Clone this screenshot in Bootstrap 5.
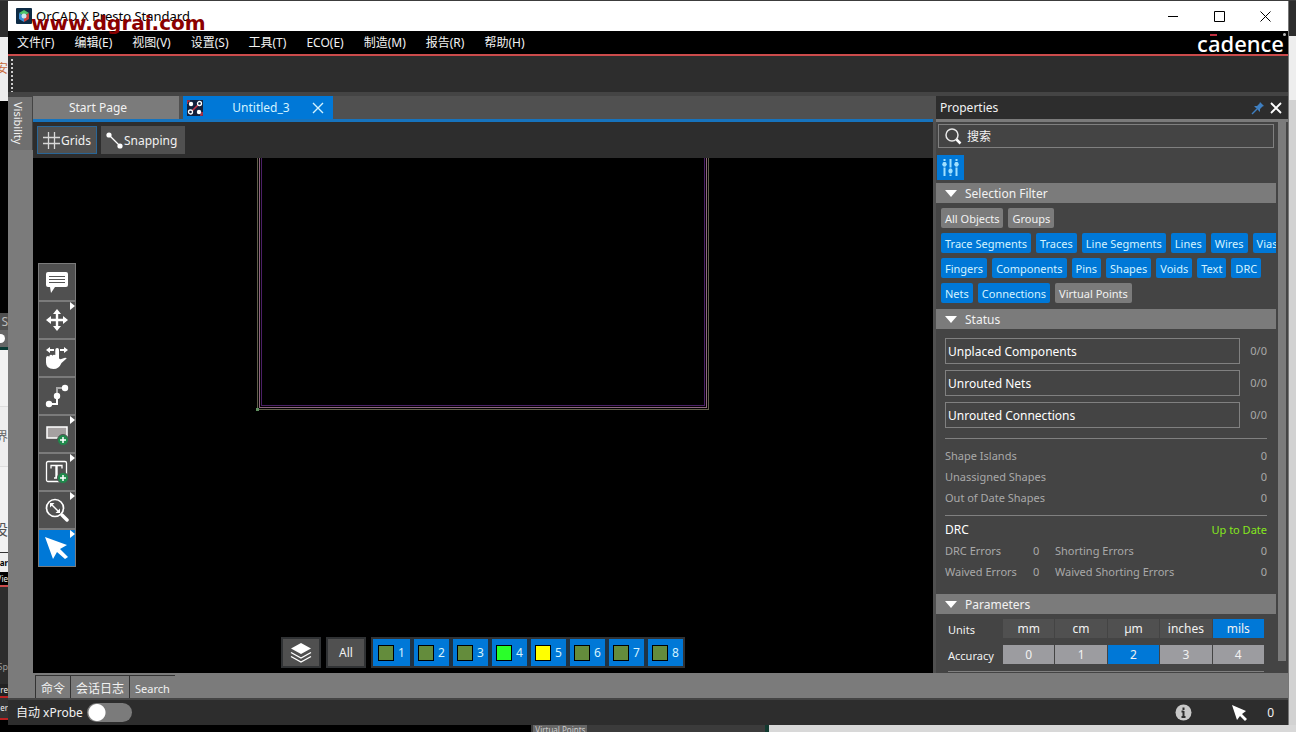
<!DOCTYPE html>
<html lang="zh-CN" data-bs-theme="dark">
<head>
<meta charset="utf-8">
<meta name="viewport" content="width=device-width, initial-scale=1">
<title>OrCAD X Presto Standard</title>
<link href="https://cdn.jsdelivr.net/npm/bootstrap@5.3.0/dist/css/bootstrap.min.css" rel="stylesheet">
<style>
:root{--blue:#0078d7;--bar:#2d2d2d;--panel:#444;--grey:#7b7b7b;--cell:#505050;--dim:#a9a9a9}
body{font-family:"Noto Sans","Noto Sans CJK SC",sans-serif;font-size:12px;line-height:16px;color:#f2f2f2;background:#000}
button,input{font:inherit;color:inherit;border:0;padding:0}
svg{display:block;flex:none}
.desktop{height:100vh;display:grid;grid-template:1px minmax(0,1fr) 7px / 8px minmax(0,1fr) 8px}
.edge-top{grid-column:1/4;background:#3c3c3c}
.edge-left>div{overflow:hidden;display:flex;justify-content:flex-end;align-items:center;white-space:nowrap;flex:none}
.edge-bottom{grid-column:1/4;overflow:hidden}
.ghost{background:#3b3b3b;padding-left:2px}
.ghost span{display:inline-block;background:#666;color:#ccc;font-size:8px;line-height:10px;padding:0 2px;vertical-align:top}
.app{box-shadow:1px 0 0 #777;background:var(--panel);z-index:1}
.title-bar{height:30px;background:#fff;color:#000}
.title-bar .name{font-size:13px}
.title-bar .btn-win{width:46px;height:28px;background:none;color:#000;display:grid;place-items:center}
.watermark{position:absolute;left:23px;top:9px;font:bold 20px/26px "DejaVu Sans",sans-serif;color:#8b0000;z-index:3;pointer-events:none}
.menu-bar{height:25px;background:#000;border-bottom:2px solid #cb4b4b}
.menu-bar a{color:#f2f2f2;text-decoration:none}
.menu-bar nav{gap:20px;padding-left:9px}
.brand{font-size:22px;line-height:22px;font-weight:500;color:#fff}
.brand .bar-a{position:relative}
.brand .bar-a::before{content:"";position:absolute;left:2px;top:6px;width:7px;height:2px;background:#c03040}
.brand .dot{position:absolute;right:2px;top:2px;width:3px;height:3px;border-radius:50%;background:#bbb}
.tool-strip{height:36px;background:var(--bar);padding:3px 0 0 3px}
.grip{width:2px;background:repeating-linear-gradient(#ccc 0 2px,transparent 2px 4px)}
.rail{width:25px;background:var(--grey)}
.rail button{writing-mode:vertical-rl;background:#6f6f6f;height:54px;width:25px;border:solid #444;border-width:1px 1px 0 0;text-align:left;padding:5px 4px 0 0;line-height:18px;white-space:nowrap;font-size:11px}
.doc-tabs{height:26px;background:#505050;border-bottom:3px solid #1673bd;gap:4px}
.doc-tabs .tab-doc{height:23px;background:var(--grey)}
.doc-tabs .tab-doc.on{background:var(--blue);color:#d3f3ff;width:150px}
.view-tools{height:36px;background:var(--bar);padding:4px;gap:4px}
.view-tools button{height:28px;background:#505050;border:1px solid #505050;padding:1px 7px 0 5px;gap:1px}
.view-tools button+button{padding-left:4px}
.view-tools button.on{border-color:#2a6697;padding-right:5px}
.canvas{background:#000;overflow:hidden}
.outline{width:452px;height:49%;border:1px solid #625f4b;border-top:0;padding:0 1px 1px;position:relative}
.outline div{border:1px solid #8f6880;border-top:0;padding:0 1px 1px;height:100%}
.outline div div{border-color:#4b2066}
.outline::after{content:"";position:absolute;left:-2px;bottom:-2px;width:3px;height:3px;background:#5f8f5f}
.palette{left:5px;top:0;bottom:1px;display:flex;flex-direction:column;justify-content:center}
.palette button{width:38px;height:38px;background:var(--cell);border:1px solid var(--grey);position:relative;display:grid;place-items:center}
.palette button.on{background:var(--blue)}
.palette .more::after{content:"";position:absolute;right:0;top:0;border:solid transparent;border-width:4px 0 4px 5px;border-left-color:#fff}
.layer-bar{bottom:5px;left:0;right:0;gap:5px}
.layer-bar>*{border:2px solid #303234;height:31px}
.layer-bar>button{width:40px;background:var(--cell)}
.layers{gap:4px;background:#1f3345}
.layers button{background:var(--blue);width:35px;color:#d3f3ff;gap:4px}
.layers button:first-child{width:37px}
.swatch{width:16px;height:16px;border:1px solid #000;background:#648c3c}
.split-v{width:3px;background:#505050}
.panel-side{width:352px;background:var(--panel)}
.panel-head{height:26px;background:var(--bar);border-bottom:3px solid var(--grey);padding:0 5px 0 4px}
.panel-head button{background:none}
.scroll-body{width:340px;overflow:hidden;flex:none}
.scroll-track{width:8px;margin:0 2px 12px 2px;background:var(--grey)}
.find-box{margin:2px 2px 7px;height:24px;border:1px solid #808080;padding:0 6px;gap:5px}
.find-box input{background:none;outline:0;padding-top:2px}
.find-box input::placeholder{color:#f2f2f2;opacity:1}
.filter-btn{width:27px;height:25px;margin:0 1px 3px;background:var(--blue);display:grid;place-items:center}
.section-head{height:20px;background:var(--grey);padding:2px 0 0 9px;gap:8px;width:100%;text-align:left}
.chips{padding:5px 0 6px 5px;gap:5px}
.chips>div{gap:5px;white-space:nowrap}
.chip{height:20px;padding:1px 4px 0;border-radius:2px;background:var(--blue);color:#d3f3ff;flex:none;font-size:11px}
.chip.off{background:var(--grey);color:#f2f2f2}
.status-block{padding:9px 9px 0}
.goto{gap:6px}
.goto button{height:26px;flex:1;border:1px solid #808080;background:none;text-align:left;padding:2px 0 0 2px;color:#fff}
.goto div{gap:10px}
.dimmed{color:var(--dim)}
.goto .dimmed,table.facts{font-size:11px}
.rule{border-top:1px solid #808080}
.facts{margin:0}
.facts,.facts td,.facts th{line-height:21px;padding:0;font-weight:400}
.goto+.facts{margin:10px 0 7px;border-collapse:separate;border-spacing:0;padding-top:6px}
.facts-drc{padding-top:3px;margin-bottom:12px}
.fresh{color:#85e81c;font-size:11px}
.c-name{width:88px}
.c-num{width:22px}
.opts{padding:5px 12px 0;gap:7px}
.opts .lbl{width:55px;flex:none;padding-top:3px;font-size:11px}
.opts .seg{display:grid;grid-template-columns:repeat(5,1fr);gap:1px;flex:1}
.opts button{height:19px;background:var(--cell)}
.opts .acc button{background:#9c9ca0}
.opts button.on,.opts .acc button.on{background:var(--blue)}
.bottom-tabs{height:27px;background:var(--grey);border-bottom:2px solid #444;padding:2px 0 0 27px}
.bottom-tabs button{background:none;border-top:1px solid #333;border-left:1px solid #333;padding:3px 5px 0}
.bottom-tabs button:last-child{font-size:11px}
.foot{height:25px;background:var(--bar);padding:0 14px 0 8px}
.foot .toggle{appearance:none;width:45px;height:19px;border-radius:10px;background:radial-gradient(circle at 10px 50%,#fff 8px,var(--grey) 9px)}
.foot .info{margin-right:40px}
.foot .ptr{margin-right:19px}
</style>
</head>
<body>
<div class="desktop">
  <div class="edge-top"></div>
  <div class="edge-left d-flex flex-column overflow-hidden" aria-hidden="true">
    <div style="height:36px;background:#2d2d2d"></div>
    <div style="height:64px;background:#eee;color:#c86a3c">安</div>
    <div style="height:212px;background:#000"></div>
    <div style="height:17px;background:#505050;color:#bbb">S</div>
    <div style="height:17px;background:#666"><i class="bg-white rounded-circle flex-shrink-0" style="width:9px;height:9px;margin-right:3px"></i></div>
    <div style="height:3px;background:#0a3a34"></div>
    <div style="height:56px;background:#f2f2f2"></div>
    <div style="height:60px;background:#eee;color:#666;border-top:1px solid #ddd">界</div>
    <div style="height:86px;background:#f2f2f2;color:#555;font-size:15px;border-top:1px solid #ddd;padding-top:38px">设</div>
    <div style="height:20px;background:#eee;color:#000;font-size:8px;font-weight:700;border-top:1px solid #333">tar</div>
    <div style="height:13px;background:#000;font-size:8px">Vie</div>
    <div style="height:99px;background:#2d2d2d;border-top:2px solid #cb4b4b;color:#999;font-size:9px;padding-top:62px">Sp</div>
    <div style="height:14px;background:#222;border-bottom:2px solid #b22;font-size:8px">re</div>
    <div style="height:22px;background:#333;border-bottom:2px solid #b22;font-size:8px">er</div>
  </div>

  <main class="app d-flex flex-column position-relative">
    <header class="title-bar d-flex align-items-center justify-content-between flex-shrink-0">
      <div class="d-flex align-items-center ps-2 gap-1">
        <svg width="16" height="16" viewBox="0 0 16 16"><rect width="16" height="16" rx="1" fill="#0d2b45"/><path d="M8 2l5 3-5 3-5-3z" fill="#4ec36b"/><path d="M3 5l5 3v6l-5-3z" fill="#3b8fd6"/><path d="M13 5L8 8v6l5-3z" fill="#c8423c"/><circle cx="8" cy="8" r="2.5" fill="#cfe6ee"/></svg>
        <span class="name">OrCAD X Presto Standard</span>
      </div>
      <div class="d-flex">
        <button class="btn-win" aria-label="Minimize"><svg width="11" height="11"><path d="M0 5.5h10" stroke="#000"/></svg></button>
        <button class="btn-win" aria-label="Maximize"><svg width="11" height="11"><path d="M.5.5h10v10h-10z" fill="none" stroke="#000"/></svg></button>
        <button class="btn-win" aria-label="Close"><svg width="11" height="11"><path d="M.5.5l10 10m0-10l-10 10" stroke="#000"/></svg></button>
      </div>
    </header>
    <div class="watermark">www.dgrai.com</div>

    <div class="menu-bar d-flex align-items-center justify-content-between flex-shrink-0 position-relative">
      <nav class="d-flex">
        <a href="#">文件(F)</a><a href="#">编辑(E)</a><a href="#">视图(V)</a><a href="#">设置(S)</a><a href="#">工具(T)</a><a href="#">ECO(E)</a><a href="#">制造(M)</a><a href="#">报告(R)</a><a href="#">帮助(H)</a>
      </nav>
      <div class="brand pe-1">c<span class="bar-a">a</span>dence<i class="dot"></i></div>
    </div>
    <div class="tool-strip d-flex flex-shrink-0 mb-1"><div class="grip"></div></div>

    <div class="d-flex flex-grow-1 overflow-hidden">
      <aside class="rail flex-shrink-0"><button>Visibility</button></aside>

      <section class="d-flex flex-column flex-grow-1 overflow-hidden">
        <div class="doc-tabs d-flex flex-shrink-0">
          <button class="tab-doc" style="width:146px"><span class="pe-3">Start Page</span></button>
          <div class="tab-doc on d-flex align-items-center justify-content-between ps-1 pe-2">
            <svg width="16" height="16" viewBox="0 0 16 16"><rect width="16" height="16" fill="#14203c"/><path d="M4 12l8-8M0 4V1h3M13 15h2v-3" stroke="#c33348" stroke-width="1.6" fill="none"/><circle cx="4" cy="4" r="2.2" fill="#fff"/><circle cx="12" cy="12" r="2.2" fill="#fff"/><circle cx="12.5" cy="3.5" r="2" fill="#14203c" stroke="#fff" stroke-width="1.3"/><circle cx="3.5" cy="12" r="2" fill="#14203c" stroke="#fff" stroke-width="1.3"/></svg>
            <button class="bg-transparent ps-2">Untitled_3</button>
            <button class="bg-transparent" aria-label="Close tab"><svg width="14" height="12"><path d="M2 1l10 10m0-10L2 11" stroke="#d3f3ff" stroke-width="1.4"/></svg></button>
          </div>
        </div>
        <div class="view-tools d-flex flex-shrink-0">
          <button class="on d-flex align-items-center"><svg width="17" height="17"><path d="M5.5 0v17M11.5 0v17M0 5.5h17M0 11.5h17" stroke="#d8d8d8" stroke-width="1.3"/></svg>Grids</button>
          <button class="d-flex align-items-center"><svg width="17" height="17"><path d="M3 3l11 11" stroke="#fff" stroke-width="1.2"/><circle cx="3" cy="3" r="2.6" fill="#fff"/><circle cx="14" cy="14" r="2.6" fill="#fff"/></svg>Snapping</button>
        </div>
        <div class="canvas flex-grow-1 position-relative d-flex justify-content-center">
          <div class="outline"><div><div></div></div></div>

          <div class="palette position-absolute" role="toolbar">
            <button aria-label="Comment"><svg width="24" height="24"><path d="M3 2h18a2 2 0 0 1 2 2v11a2 2 0 0 1-2 2H10l-4 6-1-6H3a2 2 0 0 1-2-2V4a2 2 0 0 1 2-2z" fill="#fff"/><path d="M4 6.5h16M4 9.5h16M4 12.5h16" stroke="#555"/></svg></button>
            <button class="more" aria-label="Move"><svg width="24" height="24"><path d="M12 3v18M3 12h18" stroke="#fff" stroke-width="2.4"/><path d="M12 1l4 5H8zM12 23l4-5H8zM1 12l5-4v8zM23 12l-5-4v8z" fill="#fff"/></svg></button>
            <button aria-label="Pan"><svg width="24" height="24"><path d="M1 4l4-3v2h4v2H5v2zM23 4l-4-3v2h-4v2h4v2z" fill="#fff"/><path d="M10.300 4q0-2 1.900-2T14 4v8.500l1.500.8 4.500-1.500q2.500 0 1 1.200L16.500 17q-2.500 6-8 6Q1 23 1 16.500V12q.2-2 1.800-2 1 0 1.400.8Q4.500 8.500 6 8.700q1 0 1.400 1Q8.200 8 10.300 9z" fill="#fff"/></svg></button>
            <button aria-label="Route"><svg width="24" height="24"><path d="M4 20h8V12" stroke="#fff" stroke-width="2" fill="none"/><path d="M12 12V4h8" stroke="#aaa" stroke-width="2" fill="none"/><circle cx="4" cy="20" r="3.2" fill="#fff"/><circle cx="12" cy="12" r="3.2" fill="#fff"/><circle cx="20" cy="4" r="3.2" fill="#fff"/></svg></button>
            <button class="more" aria-label="Add shape"><svg width="24" height="24"><path d="M2 5h20v11H2z" fill="#a5a1a1" stroke="#fff" stroke-width="1.5"/><circle cx="18" cy="18" r="5.5" fill="#1f8a4c" stroke="#505050"/><path d="M18 15v6M15 18h6" stroke="#fff" stroke-width="1.5"/></svg></button>
            <button class="more" aria-label="Add text"><svg width="24" height="24"><rect x="1.500" y="1.500" width="20" height="20" rx="1.5" fill="none" stroke="#fff" stroke-width="1.3"/><path d="M6 8.500V5.500h11v3M9 18h5" fill="none" stroke="#fff" stroke-width="1.3"/><path d="M11.500 5v13" stroke="#fff" stroke-width="2.400"/><circle cx="18" cy="18" r="5.5" fill="#1f8a4c" stroke="#505050"/><path d="M18 15v6M15 18h6" stroke="#fff" stroke-width="1.5"/></svg></button>
            <button class="more" aria-label="Zoom"><svg width="24" height="24"><circle cx="10" cy="10" r="8.5" fill="none" stroke="#fff" stroke-width="1.7"/><path d="M17 17l5 5" stroke="#fff" stroke-width="3.5" stroke-linecap="round"/><path d="M7 7l6 6" stroke="#fff" stroke-width="1.4"/><path d="M5 5h4.500L5 9.500zM15 15h-4.500l4.500-4.500z" fill="#fff"/></svg></button>
            <button class="more on" aria-label="Select"><svg width="24" height="24"><path d="M0 1l22 8-7 4 8 8-3 2-8-7-4 7z" fill="#fff"/></svg></button>
          </div>

          <div class="layer-bar position-absolute d-flex justify-content-center">
            <button class="d-flex align-items-center justify-content-center" aria-label="Layers"><svg width="22" height="20"><path d="M11 0l10 5.5-10 5.500L1 5.500z" fill="#fff"/><path d="M1 9.500l10 5.500 10-5.500M1 13.500l10 5.500 10-5.500" fill="none" stroke="#fff" stroke-width="1.4"/></svg></button>
            <button>All</button>
            <div class="layers d-flex">
              <button class="d-flex align-items-center justify-content-center"><i class="swatch"></i>1</button>
              <button class="d-flex align-items-center justify-content-center"><i class="swatch"></i>2</button>
              <button class="d-flex align-items-center justify-content-center"><i class="swatch"></i>3</button>
              <button class="d-flex align-items-center justify-content-center"><i class="swatch" style="background:#2aff2a"></i>4</button>
              <button class="d-flex align-items-center justify-content-center"><i class="swatch" style="background:#ff0"></i>5</button>
              <button class="d-flex align-items-center justify-content-center"><i class="swatch"></i>6</button>
              <button class="d-flex align-items-center justify-content-center"><i class="swatch"></i>7</button>
              <button class="d-flex align-items-center justify-content-center"><i class="swatch"></i>8</button>
            </div>
          </div>
        </div>
      </section>

      <div class="split-v flex-shrink-0"></div>
      <aside class="panel-side d-flex flex-column flex-shrink-0">
        <div class="panel-head d-flex align-items-center flex-shrink-0">
          <span class="me-auto">Properties</span>
          <button class="me-1" aria-label="Pin"><svg width="14" height="14"><path d="M9 1l4 4-1.500.5L9 8v3L3 5h3l2.500-2.500z" fill="#3f7fc0"/><path d="M6 8l-5 5" stroke="#3f7fc0" stroke-width="1.5"/></svg></button>
          <button aria-label="Close panel"><svg width="14" height="14"><path d="M2 2l10 10m0-10L2 12" stroke="#fff" stroke-width="1.8"/></svg></button>
        </div>
        <div class="d-flex flex-grow-1 overflow-hidden">
          <div class="scroll-body">
            <label class="find-box d-flex align-items-center"><svg width="17" height="17"><circle cx="7" cy="7" r="6" fill="none" stroke="#e8e8e8" stroke-width="1.5"/><path d="M11.500 11.500l4 4" stroke="#fff" stroke-width="2.5"/></svg><input class="flex-grow-1" type="text" placeholder="搜索" aria-label="搜索"></label>
            <button class="filter-btn" aria-label="Filters"><svg width="17" height="17"><path d="M2.500 0v17M8.500 0v17M14.500 0v17" stroke="#9fe0ff" stroke-width="2"/><path d="M0 2.500h5M12 2.500h5M0 8h5M12 8h5M6 9h5M6 15h5" stroke="#0078d7"/><circle cx="2.500" cy="5.200" r="2.200" fill="#9fe0ff"/><circle cx="8.500" cy="12" r="2.200" fill="#9fe0ff"/><circle cx="14.500" cy="5.200" r="2.200" fill="#9fe0ff"/></svg></button>
            <button class="section-head d-flex align-items-center"><svg width="12" height="9"><path d="M0 0h12L6 7z" fill="#fff"/></svg>Selection Filter</button>
            <div class="chips d-flex flex-column">
              <div class="d-flex"><button class="chip off">All Objects</button><button class="chip off">Groups</button></div>
              <div class="d-flex"><button class="chip">Trace Segments</button><button class="chip">Traces</button><button class="chip">Line Segments</button><button class="chip">Lines</button><button class="chip">Wires</button><button class="chip">Vias</button></div>
              <div class="d-flex"><button class="chip">Fingers</button><button class="chip">Components</button><button class="chip">Pins</button><button class="chip">Shapes</button><button class="chip">Voids</button><button class="chip">Text</button><button class="chip">DRC</button></div>
              <div class="d-flex"><button class="chip">Nets</button><button class="chip">Connections</button><button class="chip off">Virtual Points</button></div>
            </div>
            <button class="section-head d-flex align-items-center"><svg width="12" height="9"><path d="M0 0h12L6 7z" fill="#fff"/></svg>Status</button>
            <div class="status-block">
              <div class="goto d-flex flex-column">
                <div class="d-flex align-items-center"><button>Unplaced Components</button><span class="dimmed">0/0</span></div>
                <div class="d-flex align-items-center"><button>Unrouted Nets</button><span class="dimmed">0/0</span></div>
                <div class="d-flex align-items-center"><button>Unrouted Connections</button><span class="dimmed">0/0</span></div>
              </div>
              <table class="facts dimmed w-100 rule">
                <tr><th>Shape Islands</th><td class="text-end">0</td></tr>
                <tr><th>Unassigned Shapes</th><td class="text-end">0</td></tr>
                <tr><th>Out of Date Shapes</th><td class="text-end">0</td></tr>
              </table>
              <div class="rule facts-drc">
                <div class="facts d-flex justify-content-between"><span class="text-white">DRC</span><span class="fresh">Up to Date</span></div>
                <table class="facts dimmed w-100">
                  <tr><th class="c-name">DRC Errors</th><td class="c-num">0</td><th>Shorting Errors</th><td class="text-end">0</td></tr>
                  <tr><th class="c-name">Waived Errors</th><td class="c-num">0</td><th>Waived Shorting Errors</th><td class="text-end">0</td></tr>
                </table>
              </div>
            </div>
            <button class="section-head d-flex align-items-center"><svg width="12" height="9"><path d="M0 0h12L6 7z" fill="#fff"/></svg>Parameters</button>
            <div class="opts d-flex flex-column">
              <div class="d-flex"><span class="lbl">Units</span><div class="seg"><button>mm</button><button>cm</button><button>µm</button><button>inches</button><button class="on">mils</button></div></div>
              <div class="d-flex acc"><span class="lbl">Accuracy</span><div class="seg"><button>0</button><button>1</button><button class="on">2</button><button>3</button><button>4</button></div></div>
              <div class="rule"></div>
            </div>
          </div>
          <div class="scroll-track"></div>
        </div>
      </aside>
    </div>

    <div class="bottom-tabs d-flex flex-shrink-0"><button>命令</button><button>会话日志</button><button>Search</button></div>
    <footer class="foot d-flex align-items-center flex-shrink-0">
      <label for="probe" class="me-1">自动 xProbe</label><input class="toggle me-auto" type="checkbox" role="switch" id="probe">
      <svg width="17" height="17" class="info"><circle cx="8.500" cy="8.500" r="8" fill="#c8c8c8"/><path d="M8.500 7v6.500M8.500 3.500v2.500M6.500 7.500h2M6.500 13h4" stroke="#2d2d2d" stroke-width="2"/></svg>
      <svg width="16" height="16" class="ptr"><path d="M0 0l14 6-4 3 5 5-2 2-5-5-3 4z" fill="#fff"/></svg>
      <span>0</span>
    </footer>
  </main>

  <div class="edge-right d-flex flex-column" aria-hidden="true">
    <div style="height:35px;background:#2d2d2d"></div>
    <div style="height:64px;background:#eee"></div>
    <div class="flex-grow-1" style="background:#d2d2d2"></div>
  </div>
  <div class="edge-bottom d-flex" aria-hidden="true">
    <div style="width:41%;background:#000"></div>
    <div class="ghost" style="width:18%"><span>Virtual Points</span></div>
    <div class="flex-grow-1" style="background:#d8d8d8;border-left:4px solid #123a30"></div>
  </div>
</div>
<script src="https://cdn.jsdelivr.net/npm/bootstrap@5.3.0/dist/js/bootstrap.bundle.min.js"></script>
</body>
</html>
